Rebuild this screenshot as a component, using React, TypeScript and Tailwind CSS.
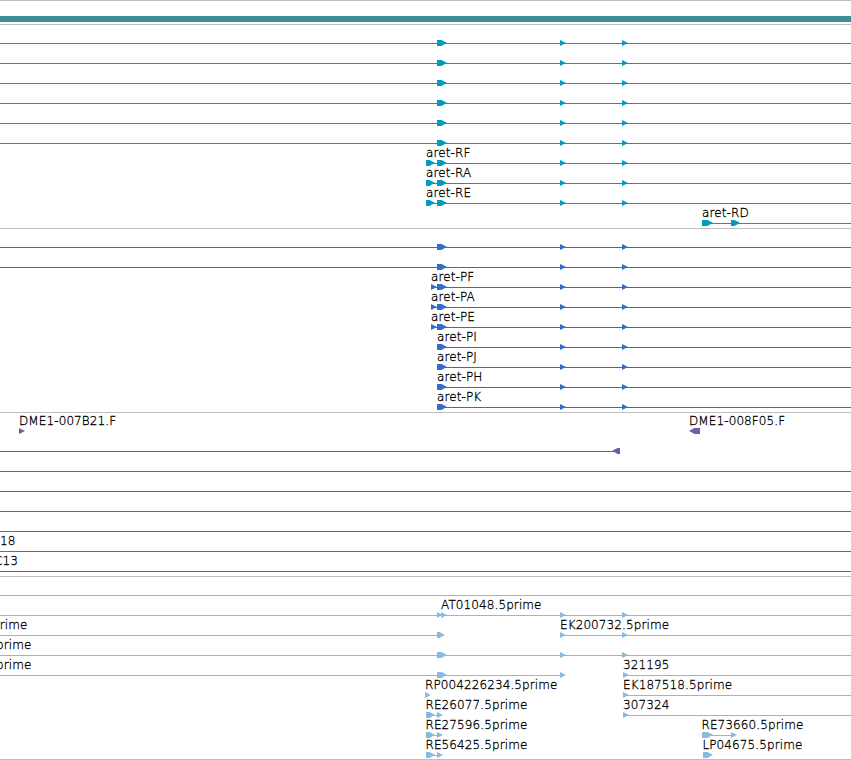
import React from "react";

type Glyph = { from: number; to: number; reverse?: boolean };
type Label = { x: number; text: string };
type Row = {
  labels?: Label[];
  lines?: [number, number][];
  glyphs?: Glyph[];
};
type TrackData = { name: string; color: string; rows: Row[] };

const WIDTH = 851;
const FULL: [number, number] = [0, WIDTH];

const exon1: Glyph = { from: 437, to: 447 };
const exon2: Glyph = { from: 560, to: 566 };
const exon3: Glyph = { from: 622, to: 628 };
const exons = [exon1, exon2, exon3];
const start: Glyph = { from: 426, to: 435 };

function fullRow(): Row {
  return { lines: [FULL], glyphs: exons };
}

function transcript(text: string): Row {
  return {
    labels: [{ x: 426, text }],
    lines: [[426, WIDTH]],
    glyphs: [start, ...exons],
  };
}

function protein(text: string, from: number): Row {
  const first: Glyph[] = from < 437 ? [{ from, to: from + 6 }] : [];
  return {
    labels: [{ x: from, text }],
    lines: [[from, WIDTH]],
    glyphs: [...first, ...exons],
  };
}

const tracks: TrackData[] = [
  {
    name: "transcripts",
    color: "#009bbf",
    rows: [
      fullRow(),
      fullRow(),
      fullRow(),
      fullRow(),
      fullRow(),
      fullRow(),
      transcript("aret-RF"),
      transcript("aret-RA"),
      transcript("aret-RE"),
      {
        labels: [{ x: 702, text: "aret-RD" }],
        lines: [[702, WIDTH]],
        glyphs: [{ from: 702, to: 713 }, { from: 731, to: 740 }],
      },
    ],
  },
  {
    name: "proteins",
    color: "#326ccc",
    rows: [
      fullRow(),
      fullRow(),
      protein("aret-PF", 431),
      protein("aret-PA", 431),
      protein("aret-PE", 431),
      protein("aret-PI", 437),
      protein("aret-PJ", 437),
      protein("aret-PH", 437),
      protein("aret-PK", 437),
    ],
  },
  {
    name: "clones",
    color: "#7858a8",
    rows: [
      {
        labels: [{ x: 19, text: "DME1-007B21.F" }, { x: 689, text: "DME1-008F05.F" }],
        glyphs: [{ from: 19, to: 25 }, { from: 689, to: 700, reverse: true }],
      },
      { lines: [[0, 620]], glyphs: [{ from: 612, to: 620, reverse: true }] },
      { lines: [FULL] },
      { lines: [FULL] },
      { lines: [FULL] },
      { lines: [FULL] },
      { labels: [{ x: 0, text: "18" }], lines: [FULL] },
      { labels: [{ x: -6, text: "C13" }], lines: [FULL] },
    ],
  },
  {
    name: "ests",
    color: "#87bbdf",
    rows: [
      { lines: [FULL] },
      {
        labels: [{ x: 441, text: "AT01048.5prime" }],
        lines: [FULL],
        glyphs: [{ from: 437, to: 442 }, { from: 441, to: 447 }, exon2, exon3],
      },
      {
        labels: [{ x: -8, text: "prime" }, { x: 560, text: "EK200732.5prime" }],
        lines: [[0, 437], [560, WIDTH]],
        glyphs: [{ from: 437, to: 445 }, exon2, exon3],
      },
      { labels: [{ x: -4, text: "prime" }], lines: [FULL], glyphs: exons },
      {
        labels: [{ x: -4, text: "prime" }, { x: 623, text: "321195" }],
        lines: [[0, 560], [623, WIDTH]],
        glyphs: [exon1, exon2, { from: 623, to: 629 }],
      },
      {
        labels: [{ x: 425, text: "RP004226234.5prime" }, { x: 623, text: "EK187518.5prime" }],
        lines: [[623, WIDTH]],
        glyphs: [{ from: 425, to: 431 }, { from: 623, to: 629 }],
      },
      {
        labels: [{ x: 425.5, text: "RE26077.5prime" }, { x: 623, text: "307324" }],
        lines: [[426, 437], [623, WIDTH]],
        glyphs: [start, { from: 437, to: 443 }, { from: 623, to: 629 }],
      },
      {
        labels: [{ x: 425.5, text: "RE27596.5prime" }, { x: 701.5, text: "RE73660.5prime" }],
        lines: [[426, 437], [702, 731]],
        glyphs: [start, { from: 437, to: 443 }, { from: 702, to: 713 }, { from: 731, to: 737 }],
      },
      {
        labels: [{ x: 425.5, text: "RE56425.5prime" }, { x: 702.5, text: "LP04675.5prime" }],
        lines: [[426, 437]],
        glyphs: [start, { from: 437, to: 443 }, { from: 703, to: 713 }],
      },
    ],
  },
];

// short features are plain arrowheads, longer ones get a blunt body
function glyphPoints({ from, to, reverse }: Glyph) {
  const tail = reverse ? to : from;
  const tip = reverse ? from : to;
  const dir = reverse ? -1 : 1;
  if (to - from <= 6) {
    return `${tail},12 ${tip},15 ${tail},18`;
  }
  const neck = tip - Math.min(5.5, to - from) * dir;
  const cheek = tip - 3 * dir;
  return `${tail},12 ${neck},12 ${cheek},13.2 ${tip},15 ${cheek},16.4 ${neck},18 ${tail},18`;
}

function FeatureRow({ row, color }: { row: Row; color: string }) {
  return (
    <div className="relative h-5 shrink-0">
      <svg className="block" width={WIDTH} height={20} fill={color}>
        {row.lines?.map(([a, b]) => (
          <rect key={a} x={a} y={15} width={b - a} height={1} />
        ))}
        {row.glyphs?.map((g) => (
          <polygon key={g.from} points={glyphPoints(g)} />
        ))}
      </svg>
      {row.labels?.map((l) => (
        <span
          key={l.text}
          className="absolute -top-[5px] leading-5 whitespace-nowrap tracking-[0.1px] [-webkit-text-stroke:0.3px_black]"
          style={{ left: l.x }}
        >
          {l.text}
        </span>
      ))}
    </div>
  );
}

function Track({ track }: { track: TrackData }) {
  return (
    <section aria-label={track.name} className="border-t border-[#bebebe] pt-[3px]">
      {track.rows.map((row, i) => (
        <FeatureRow key={i} row={row} color={track.color} />
      ))}
    </section>
  );
}

export default function App() {
  return (
    <div className="flex h-[760px] w-[851px] flex-col overflow-hidden border-t border-[#bebebe] bg-white font-['DejaVu_Sans',sans-serif] text-[12px] font-extralight text-black">
      <div className="mt-[15px] mb-[2px] h-1.5 shrink-0 bg-[#3d8f93]" />
      <div className="flex h-[735px] shrink-0 flex-col overflow-hidden">
        {tracks.map((t) => (
          <Track key={t.name} track={t} />
        ))}
      </div>
      <div className="h-px shrink-0 bg-[#bebebe]" />
    </div>
  );
}
